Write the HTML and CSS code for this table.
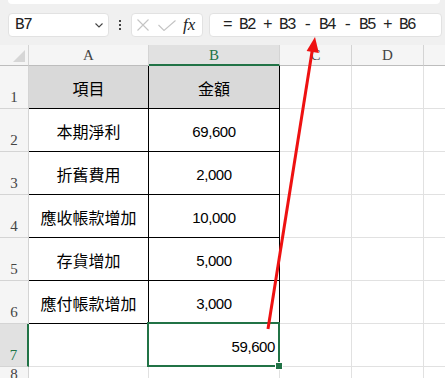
FILE: index.html
```html
<!DOCTYPE html>
<html lang="zh-Hant">
<head>
<meta charset="utf-8">
<link rel="stylesheet" href="styles.css">
</head>
<body>
<div class="app">
  <div class="top">
    <div class="ribbon"></div>
    <div class="fbar">
      <div class="namebox">
        <span class="ref">B7</span>
        <svg class="chev" width="8" height="5" viewBox="0 0 8 5"><path d="M0.5 0.5 L4 4 L7.5 0.5" fill="none" stroke="#444" stroke-width="1.1"/></svg>
      </div>
      <div class="dots"><i></i><i></i><i></i></div>
      <div class="fxbox">
        <svg width="12" height="12" viewBox="0 0 12 12"><path d="M0.5 0.5 L11.5 11.5 M11.5 0.5 L0.5 11.5" stroke="#c4c4c4" stroke-width="1.1" fill="none"/></svg>
        <svg width="18" height="11" viewBox="0 0 18 11"><path d="M0.5 5 L6 10.5 L17.5 0.5" stroke="#c4c4c4" stroke-width="1.1" fill="none"/></svg>
        <span class="fx">fx</span>
      </div>
      <div class="formula">= B2 + B3 - B4 - B5 + B6</div>
    </div>
  </div>
  <div class="sheet">
    <div class="corner"><span class="tri"></span></div>
    <div class="ch">A</div>
    <div class="ch sel">B</div>
    <div class="ch">C</div>
    <div class="ch">D</div>
    <div class="ch last"></div>

    <div class="rh">1</div>
    <div class="c t th">項目</div>
    <div class="c t th">金額</div>
    <div class="c"></div><div class="c"></div><div class="c last"></div>

    <div class="rh">2</div>
    <div class="c t">本期淨利</div>
    <div class="c t num">69,600</div>
    <div class="c"></div><div class="c"></div><div class="c last"></div>

    <div class="rh">3</div>
    <div class="c t">折舊費用</div>
    <div class="c t num">2,000</div>
    <div class="c"></div><div class="c"></div><div class="c last"></div>

    <div class="rh">4</div>
    <div class="c t">應收帳款增加</div>
    <div class="c t num">10,000</div>
    <div class="c"></div><div class="c"></div><div class="c last"></div>

    <div class="rh">5</div>
    <div class="c t">存貨增加</div>
    <div class="c t num">5,000</div>
    <div class="c"></div><div class="c"></div><div class="c last"></div>

    <div class="rh">6</div>
    <div class="c t">應付帳款增加</div>
    <div class="c t num">3,000</div>
    <div class="c"></div><div class="c"></div><div class="c last"></div>

    <div class="rh sel">7</div>
    <div class="c"></div>
    <div class="c num right active">59,600<span class="handle"></span></div>
    <div class="c"></div><div class="c"></div><div class="c last"></div>

    <div class="rh">8</div>
    <div class="c"></div><div class="c"></div><div class="c"></div><div class="c"></div><div class="c last"></div>
  </div>
  <svg class="arrow" width="445" height="378" viewBox="0 0 445 378">
    <line x1="268" y1="329" x2="312.3" y2="50" stroke="#ee1111" stroke-width="3"/>
    <polygon points="315,37 318.8,53 306.6,51" fill="#ee1111"/>
  </svg>
</div>
</body>
</html>
```

FILE: styles.css
```css
* { box-sizing: border-box; }
body {
  margin: 0;
  width: 445px;
  height: 378px;
  overflow: hidden;
  background: #fff;
  font-family: "Noto Sans CJK TC", sans-serif;
}
.app {
  position: relative;
  height: 378px;
  display: flex;
  flex-direction: column;
}
.top { background: #f0f0f0; }
.ribbon {
  height: 4px;
  margin: 0 5px 0 8px;
  background: #fff;
  border-radius: 0 0 6px 6px;
}
.fbar {
  display: flex;
  align-items: center;
  padding: 9px 3px 8px 8px;
}
.namebox {
  width: 101px;
  height: 24px;
  background: #fff;
  border: 1px solid #e2e2e2;
  border-radius: 4px;
  display: flex;
  align-items: center;
  justify-content: space-between;
  padding: 0 5px 0 6px;
}
.ref {
  font-family: "Liberation Mono", monospace;
  font-size: 16px;
  letter-spacing: -1.3px;
  color: #222;
}
.chev { margin-top: 1px; }
.dots {
  width: 2px;
  margin: 0 10px;
  display: flex;
  flex-direction: column;
  gap: 2px;
}
.dots i {
  display: block;
  width: 2px;
  height: 2px;
  background: #444;
}
.fxbox {
  width: 72px;
  height: 24px;
  background: #fff;
  border: 1px solid #e2e2e2;
  border-radius: 4px;
  display: flex;
  align-items: center;
  padding-left: 5px;
  gap: 9px;
}
.fx {
  font-family: "Liberation Serif", serif;
  font-style: italic;
  font-size: 17px;
  color: #222;
  margin-left: -2px;
}
.formula {
  flex: 1;
  height: 24px;
  margin-left: 6px;
  background: #fff;
  border: 1px solid #e2e2e2;
  border-radius: 4px;
  display: flex;
  align-items: center;
  padding-left: 13px;
  font-family: "Liberation Mono", monospace;
  font-size: 16px;
  letter-spacing: -1.6px;
  white-space: pre;
  color: #222;
}
.sheet {
  flex: 1;
  display: grid;
  grid-template-columns: 29px 120px 131px 72px 72px 1fr;
  grid-template-rows: 21px repeat(7, 43px) 1fr;
}
.sheet > div {
  border-right: 1px solid #e1e1e1;
  border-bottom: 1px solid #e1e1e1;
}
.sheet > .last { border-right: none; }
.corner {
  background: #f5f5f5;
  position: relative;
  border-bottom-color: #bdbdbd !important;
  border-right-color: #d4d4d4 !important;
}
.tri {
  position: absolute;
  right: 3px;
  bottom: 3px;
  width: 12px;
  height: 12px;
  background: #d6d6d6;
  clip-path: polygon(100% 0, 100% 100%, 0 100%);
}
.ch {
  background: #f5f5f5;
  border-right-color: #d4d4d4 !important;
  border-bottom-color: #bdbdbd !important;
  display: flex;
  align-items: flex-end;
  justify-content: center;
  font-family: "Liberation Serif", serif;
  font-size: 15px;
  line-height: 1;
  padding-bottom: 2px;
  color: #444;
}
.ch.sel {
  background: #e1e1e1;
  color: #217346;
  border-bottom: 2px solid #217346 !important;
  padding-bottom: 1px;
}
.rh {
  background: #f5f5f5;
  border-right-color: #d4d4d4 !important;
  border-bottom-color: #d4d4d4 !important;
  display: flex;
  align-items: flex-end;
  justify-content: center;
  font-family: "Liberation Serif", serif;
  font-size: 15px;
  line-height: 1;
  padding-bottom: 3px;
  color: #444;
}
.rh.sel {
  background: #e1e1e1;
  color: #217346;
  border-right: 2px solid #217346 !important;
}
.c {
  display: flex;
  align-items: center;
  justify-content: center;
  font-size: 16px;
  color: #000;
  padding-top: 2px;
}
.c.t {
  border-right-color: #000;
  border-bottom-color: #000;
}
.c.th { background: #d9d9d9; }
.num {
  font-family: "Liberation Sans", sans-serif;
  font-size: 15px;
  letter-spacing: -0.4px;
}
.right { justify-content: flex-end; padding-right: 4px; }
.active { position: relative; }
.active::after {
  content: "";
  position: absolute;
  left: -2px;
  top: -2px;
  right: -1px;
  bottom: -1px;
  border: 2px solid #217346;
}
.handle {
  position: absolute;
  right: -3px;
  bottom: -3px;
  width: 6px;
  height: 6px;
  background: #217346;
  outline: 1px solid #fff;
  z-index: 1;
}
.arrow {
  position: absolute;
  left: 0;
  top: 0;
  pointer-events: none;
}
```
